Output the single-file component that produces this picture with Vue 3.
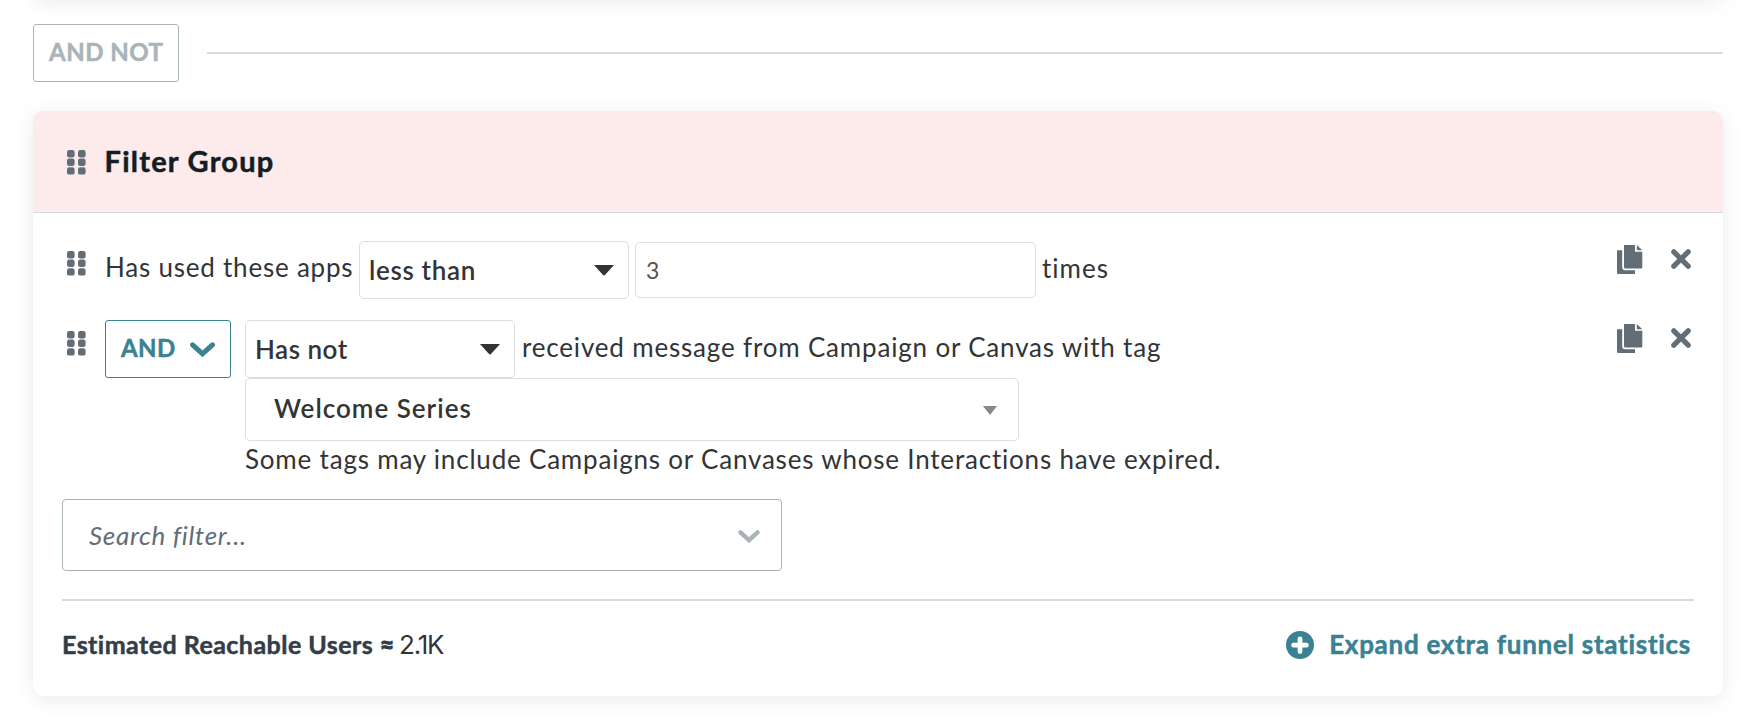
<script setup>
const rows = [{ id: 1 }, { id: 2 }]
const dots = [0, 1, 2].flatMap((r) => [0, 1].map((c) => ({ x: c * 11, y: r * 8.6 })))
</script>

<template>
  <div class="page">
    <div class="previous"></div>

    <div class="joiner">
      <div class="and-not"><span>AND NOT</span></div>
      <div class="rule"></div>
    </div>

    <section class="card">
      <header class="head">
        <svg class="drag" width="19" height="25" viewBox="0 0 19 25">
          <rect v-for="(d, i) in dots" :key="i" :x="d.x" :y="d.y" width="7.6" height="7.4" rx="2.2" />
        </svg>
        <h2>Filter Group</h2>
      </header>

      <div class="body">
        <div v-for="row in rows" :key="row.id" class="row" :class="'row-' + row.id">
          <svg class="drag" width="19" height="25" viewBox="0 0 19 25">
            <rect v-for="(d, i) in dots" :key="i" :x="d.x" :y="d.y" width="7.6" height="7.4" rx="2.2" />
          </svg>

          <div v-if="row.id === 1" class="line">
            <span class="text used">Has used these apps</span>
            <div class="select">
              <span class="less">less than</span>
              <svg width="20" height="11" viewBox="0 0 20 11"><path d="M0 0H20L11.2 9.8Q10 11 8.8 9.8Z" fill="#333" /></svg>
            </div>
            <div class="input"><span>3</span></div>
            <span class="text times">times</span>
          </div>

          <template v-else>
            <div class="and">
              <span>AND</span>
              <svg width="25" height="15" viewBox="0 0 25 15">
                <path d="M2.6 2.8L12.5 11.8L22.4 2.8" fill="none" stroke="#398193" stroke-width="5" stroke-linecap="round" />
              </svg>
            </div>
            <div class="stack">
              <div class="line">
                <div class="select">
                  <span class="hasnot">Has not</span>
                  <svg width="20" height="11" viewBox="0 0 20 11"><path d="M0 0H20L11.2 9.8Q10 11 8.8 9.8Z" fill="#333" /></svg>
                </div>
                <span class="text received">received message from Campaign or Canvas with tag</span>
              </div>
              <div class="tag">
                <span>Welcome Series</span>
                <svg width="14" height="9" viewBox="0 0 14 9"><path d="M0 0H14L7 9Z" fill="#888" /></svg>
              </div>
              <span class="text note">Some tags may include Campaigns or Canvases whose Interactions have expired.</span>
            </div>
          </template>

          <div class="actions">
            <svg width="26" height="29" viewBox="0 0 26 29" fill="#636d76">
              <path d="M0 5.3H5.2V22.2Q5.2 25.2 8.2 25.2H18V29H1.2Q0 29 0 27.8Z" />
              <path d="M7 0H18V6.8H25.3V22.2Q25.3 23.4 24.1 23.4H8.2Q7 23.4 7 22.2Z" />
              <path d="M19.8 0L25.3 5.2H19.8Z" />
            </svg>
            <svg width="20" height="20" viewBox="0 0 20 20">
              <path d="M2.8 2.8L17.2 17.2M17.2 2.8L2.8 17.2" stroke="#636d76" stroke-width="5.2" stroke-linecap="round" />
            </svg>
          </div>
        </div>

        <div class="search">
          <span>Search filter...</span>
          <svg width="22" height="13" viewBox="0 0 22 13">
            <path d="M2.5 2.4L11 10.2L19.5 2.4" fill="none" stroke="#a9b4b9" stroke-width="4.4" stroke-linecap="round" />
          </svg>
        </div>

        <footer class="foot">
          <span class="est">Estimated Reachable Users <span class="approx">≈</span></span>
          <span class="count">2.1K</span>
          <a class="expand">
            <svg width="28" height="28" viewBox="0 0 28 28">
              <circle cx="14" cy="14" r="14" fill="#398193" />
              <path d="M14 7.8V20.6M7.6 14.2H20.4" stroke="#fff" stroke-width="4.8" stroke-linecap="round" />
            </svg>
            <span>Expand extra funnel statistics</span>
          </a>
        </footer>
      </div>
    </section>
  </div>
</template>

<style>
body { background: #fff; }
</style>

<style scoped>
.page, .page * { box-sizing: border-box; }
.page {
  display: flow-root;
  width: 1760px;
  height: 718px;
  overflow: hidden;
  padding: 0 37px 0 33px;
  background: #fff;
  font-family: Lato, "Noto Sans", sans-serif;
  font-size: 26px;
  line-height: 32px;
  color: #333436;
  white-space: nowrap;
}
svg { display: block; flex: none; }
.previous { height: 30px; margin-top: -32px; border-radius: 10px; box-shadow: 0 4px 20px rgba(40, 70, 60, 0.1); }
.joiner { display: flex; align-items: center; margin-top: 26px; }
.and-not {
  width: 146px;
  height: 58px;
  padding: 0 0 2px 15px;
  display: flex;
  align-items: center;
  border: 1px solid #a9b4b9;
  border-radius: 3px;
  font-size: 24px;
  font-weight: 700;
  letter-spacing: 0.5px;
  color: #a9b4b9;
}
.and-not, .and, h2, .est, .expand span { -webkit-text-stroke: 0.5px currentColor; }
.rule { flex: 1; height: 2px; margin-left: 28px; background: #d7dce0; }
.card {
  height: 585px;
  margin-top: 29px;
  border-radius: 10px;
  background: #fff;
  box-shadow: 0 4px 20px rgba(40, 70, 60, 0.1);
}
.head {
  height: 102px;
  padding-left: 34px;
  display: flex;
  align-items: center;
  background: #fcebea;
  border-bottom: 1px solid #d7dce0;
  border-radius: 10px 10px 0 0;
}
.head .drag { margin-top: 1px; }
.drag { fill: #636d76; }
h2 {
  margin: 0 0 2px 18.5px;
  font-size: 29px;
  font-weight: 700;
  letter-spacing: 1.25px;
  color: #141c24;
}
.body { padding: 28px 29px 0; }
.row { display: flex; align-items: flex-start; padding-left: 5px; }
.row .drag { margin: 10px 19px 0 0; }
.row-1 { height: 79px; }
.row-2 { height: 179px; }
.row-2 .drag { margin-top: 11px; }
.line { display: flex; align-items: flex-start; }
.text { letter-spacing: 0.8px; }
.used { width: 254px; margin-top: 10px; letter-spacing: 0.78px; }
.select {
  width: 270px;
  height: 58px;
  padding: 0 14px 1px 9px;
  display: flex;
  align-items: center;
  justify-content: space-between;
  border: 1px solid #dcdde1;
  border-radius: 5px;
  font-weight: 600;
}
.select svg { margin-top: 1px; }
.less { letter-spacing: 0.65px; }
.hasnot { letter-spacing: 0.5px; }
.input {
  width: 401px;
  height: 56px;
  margin: 1px 0 0 6px;
  padding: 0 0 1px 10px;
  display: flex;
  align-items: center;
  border: 1px solid #dcdde1;
  border-radius: 5px;
  font-size: 23px;
  color: #555;
}
.times { margin: 11px 0 0 6px; letter-spacing: 1px; }
.and {
  width: 126px;
  height: 58px;
  padding: 0 15px 2px 15px;
  display: flex;
  align-items: center;
  justify-content: space-between;
  border: 1px solid #398193;
  border-radius: 3px;
  font-size: 24px;
  font-weight: 700;
  letter-spacing: 0.4px;
  color: #398193;
}
.and svg { margin-top: 2px; }
.stack { margin-left: 14px; display: flex; flex-direction: column; }
.received { margin: 11px 0 0 7px; letter-spacing: 0.82px; }
.tag {
  width: 774px;
  height: 63px;
  padding: 0 21px 4px 28px;
  display: flex;
  align-items: center;
  justify-content: space-between;
  border: 1px solid #dcdde1;
  border-radius: 5px;
  font-weight: 600;
  letter-spacing: 1px;
}
.tag svg { margin-top: 5px; }
.note { margin-top: 2px; }
.actions { display: flex; gap: 28px; margin: 4px 3px 0 auto; }
.actions svg + svg { margin-top: 4px; }
.search {
  width: 720px;
  height: 72px;
  padding: 0 21px 1px 26px;
  display: flex;
  align-items: center;
  justify-content: space-between;
  border: 1px solid #a9b4b9;
  border-radius: 4px;
  font-style: italic;
  letter-spacing: 0.7px;
  color: #636d76;
}
.search svg { margin-top: 3px; }
.foot {
  margin-top: 28px;
  padding: 27px 3px 0 0;
  display: flex;
  align-items: flex-start;
  border-top: 2px solid #d7dce0;
}
.est { width: 337px; font-size: 25px; font-weight: 700; letter-spacing: 0.46px; color: #323d47; }
.approx { -webkit-text-stroke: 1px currentColor; }
.count { margin-top: 1px; font-family: Inter, sans-serif; font-size: 26px; letter-spacing: -1.2px; }
.expand { margin-left: auto; display: flex; gap: 15px; font-weight: 700; letter-spacing: 0.72px; color: #398193; }
.expand svg { margin-top: 3px; }
</style>
